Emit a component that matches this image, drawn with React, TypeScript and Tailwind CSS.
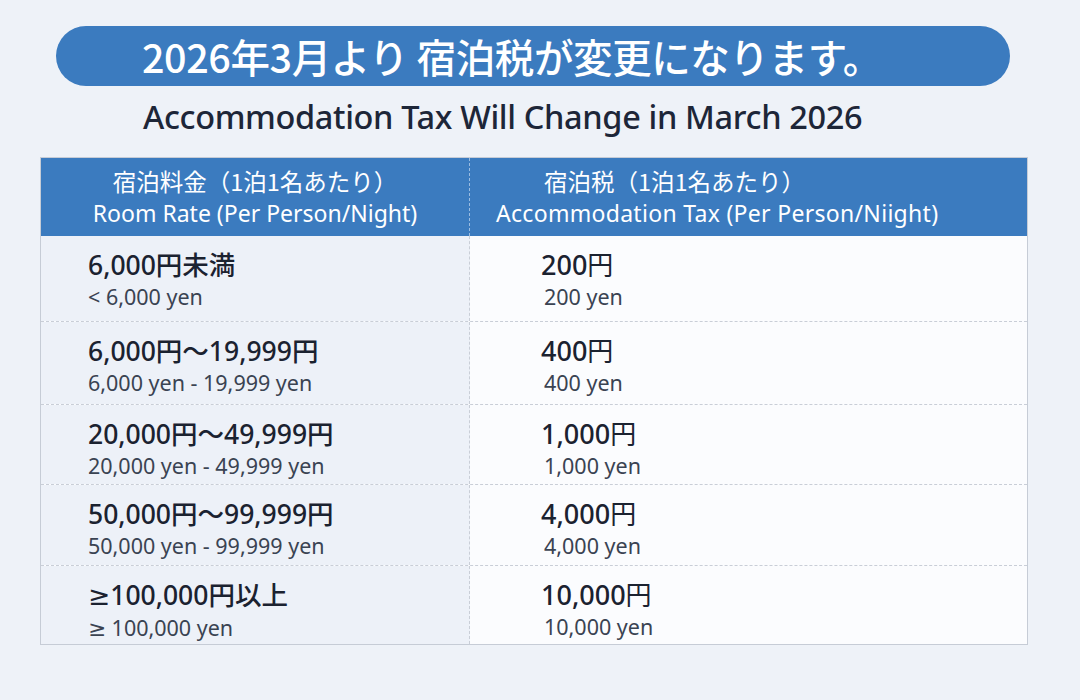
import React from "react";

const Ge = () => <span style={{ fontFamily: '"DejaVu Sans", sans-serif' }}>≥</span>;

const rows = [
  { jp: <>6,000円未満</>, en: <>&lt; 6,000 yen</>, tax: "200", taxEn: "200 yen", h: "h-[85px]" },
  { jp: <>6,000円～19,999円</>, en: <>6,000 yen - 19,999 yen</>, tax: "400", taxEn: "400 yen", h: "h-[83px]" },
  { jp: <>20,000円～49,999円</>, en: <>20,000 yen - 49,999 yen</>, tax: "1,000", taxEn: "1,000 yen", h: "h-[80px]" },
  { jp: <>50,000円～99,999円</>, en: <>50,000 yen - 99,999 yen</>, tax: "4,000", taxEn: "4,000 yen", h: "h-[81px]" },
  { jp: <><Ge />100,000円以上</>, en: <><Ge /> 100,000 yen</>, tax: "10,000", taxEn: "10,000 yen", h: "h-[79px]" },
];

const font = { fontFamily: '"Noto Sans", "Noto Sans CJK JP", sans-serif' };
const cjk = { fontFamily: '"Noto Sans CJK JP", sans-serif' };

export default function App() {
  return (
    <div className="w-[1080px] h-[700px] bg-[#eef2f8] pt-[26px] overflow-hidden" style={font}>
      <div className="ml-[56px] w-[954px] h-[60px] rounded-full bg-[#3b7bbf] flex items-center pl-[86px]">
        <span className="text-white text-[39.5px] font-medium leading-none tracking-[-0.4px]" style={cjk}>
          2026年3月より 宿泊税が変更になります。
        </span>
      </div>
      <div className="mt-[8px] pl-[143px] h-[46px] flex items-center text-[32.5px] font-medium text-[#1d2638] tracking-[-0.35px]">
        Accommodation Tax Will Change in March 2026
      </div>
      <div className="mt-[17px] ml-[40px] w-[988px] border border-[#c6ccd6] bg-[#fbfcfe]">
        <div className="flex h-[78px] bg-[#3b7bbf] text-white">
          <div className="w-[429px] border-r border-dashed border-[#9bbde2] flex flex-col items-center justify-center">
            <div className="text-[23.5px] leading-[33px]" style={cjk}>宿泊料金（1泊1名あたり）</div>
            <div className="text-[23px] leading-[31px]">Room Rate (Per Person/Night)</div>
          </div>
          <div className="flex-1 flex flex-col justify-center">
            <div className="pl-[74px] text-[23.5px] leading-[33px]" style={cjk}>宿泊税（1泊1名あたり）</div>
            <div className="pl-[26px] text-[23px] leading-[31px] tracking-[0.3px]">Accommodation Tax (Per Person/Niight)</div>
          </div>
        </div>
        {rows.map((r, i) => (
          <div key={i} className={`flex ${r.h} ${i > 0 ? "border-t border-dashed border-[#c9ced7]" : ""}`}>
            <div className="w-[429px] bg-[#edf1f8] border-r border-dashed border-[#c9ced7] pl-[47px] pt-[12px] flex flex-col">
              <div className="text-[26.5px] leading-[34px] font-medium text-[#1b2230] whitespace-nowrap">{r.jp}</div>
              <div className="text-[21.5px] leading-[29px] text-[#3a4352] whitespace-nowrap">{r.en}</div>
            </div>
            <div className="flex-1 pl-[71px] pt-[12px] flex flex-col">
              <div className="text-[27px] leading-[34px] font-medium text-[#1b2230] whitespace-nowrap">
                {r.tax}
                <span className="font-normal text-[26px]">円</span>
              </div>
              <div className="pl-[3px] text-[21.5px] leading-[29px] text-[#3a4352] whitespace-nowrap">{r.taxEn}</div>
            </div>
          </div>
        ))}
      </div>
    </div>
  );
}
